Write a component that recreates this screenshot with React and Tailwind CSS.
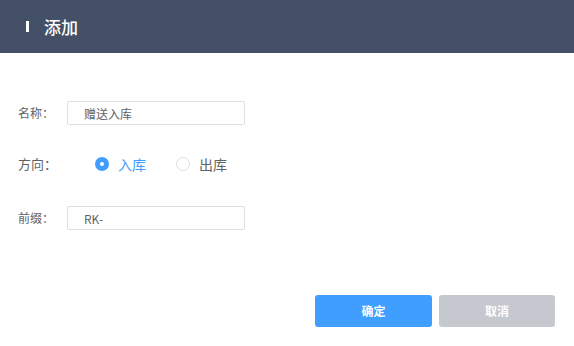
import { useState } from 'react';

const font = { fontFamily: '"Noto Sans CJK SC", "Noto Sans", sans-serif' };

const Radio = ({ checked, label, onClick }) => (
  <label onClick={onClick} className="flex items-center cursor-pointer">
    <span
      className={
        checked
          ? 'w-[14px] h-[14px] rounded-full bg-[#409eff] flex items-center justify-center'
          : 'w-[14px] h-[14px] rounded-full border border-[#dcdfe6] bg-white'
      }
    >
      {checked && <span className="w-[4px] h-[4px] rounded-full bg-white" />}
    </span>
    <span className={checked ? 'ml-[9px] text-[14px] text-[#409eff]' : 'ml-[9px] text-[14px] text-[#606266]'}>
      {label}
    </span>
  </label>
);

const App = () => {
  const [name, setName] = useState('赠送入库');
  const [prefix, setPrefix] = useState('RK-');
  const [direction, setDirection] = useState('in');

  return (
    <div className="w-[574px] h-[346px] bg-white flex flex-col" style={font}>
      <div className="h-[53px] bg-[#435067] flex items-center pl-[26px]">
        <span className="w-[3px] h-[11px] bg-white" />
        <h1 className="ml-[15px] text-[17px] font-medium text-white">添加</h1>
      </div>

      <div className="pt-[48px] pl-[18px]">
        <div className="flex items-center h-[24px]">
          <span className="w-[49px] text-[12px] text-[#606266]">名称：</span>
          <input
            value={name}
            onChange={(e) => setName(e.target.value)}
            className="w-[178px] h-[24px] border border-[#dcdfe6] rounded-[2px] pl-[16px] text-[12px] text-[#606266] outline-none"
            style={font}
          />
        </div>

        <div className="flex items-center h-[24px] mt-[27px]">
          <span className="w-[77px] text-[13px] text-[#606266]">方向：</span>
          <Radio checked={direction === 'in'} label="入库" onClick={() => setDirection('in')} />
          <div className="ml-[30px]">
            <Radio checked={direction === 'out'} label="出库" onClick={() => setDirection('out')} />
          </div>
        </div>

        <div className="flex items-center h-[24px] mt-[30px]">
          <span className="w-[49px] text-[12px] text-[#606266]">前缀：</span>
          <input
            value={prefix}
            onChange={(e) => setPrefix(e.target.value)}
            className="w-[178px] h-[24px] border border-[#dcdfe6] rounded-[2px] pl-[16px] text-[12px] text-[#606266] outline-none"
            style={font}
          />
        </div>
      </div>

      <div className="flex justify-end gap-[7px] pr-[19px] mt-[65px]">
        <button className="w-[117px] h-[32px] rounded-[3px] bg-[#409eff] text-white text-[12px] font-bold">确定</button>
        <button className="w-[116px] h-[32px] rounded-[3px] bg-[#c5c8ce] text-white text-[12px] font-bold">取消</button>
      </div>
    </div>
  );
};

export default App;
